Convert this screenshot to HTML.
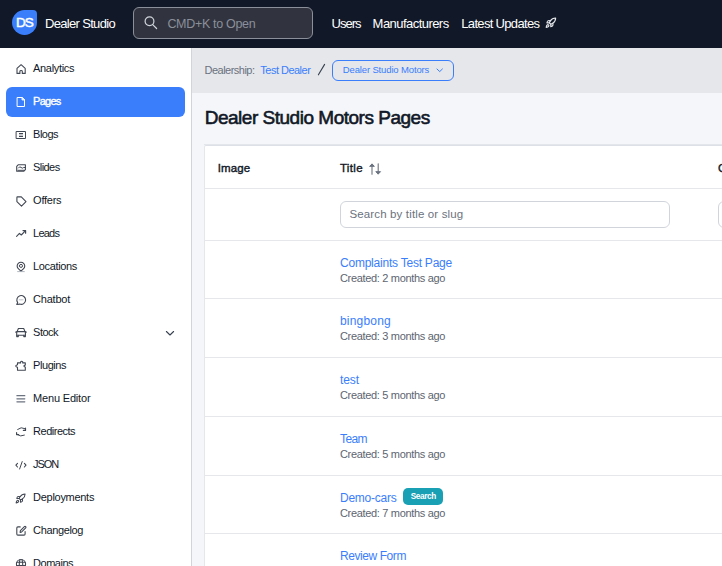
<!DOCTYPE html>
<html><head><meta charset="utf-8"><style>
*{box-sizing:border-box;margin:0;padding:0}
html,body{width:722px;height:566px;overflow:hidden;background:#f5f6f9;font-family:"Liberation Sans", sans-serif}
.a{position:absolute}
.t{position:absolute;white-space:nowrap;font-family:"Liberation Sans", sans-serif}
.ic{position:absolute;overflow:visible}
</style></head><body>
<div class="a" style="left:0;top:0;width:722px;height:48px;background:#111827"></div>
<div class="a" style="left:12px;top:10px;width:25px;height:25px;background:#3a7efc;border-radius:12.5px 4px 12.5px 12.5px"></div>
<div class="t" style="left:12px;top:10px;width:25px;height:25px;line-height:25px;text-align:center;color:#fff;font-weight:400;font-size:13.5px;letter-spacing:-1px;text-indent:-0.4px;-webkit-text-stroke:0.5px #fff">DS</div>


<div class="a" style="left:133px;top:7px;width:180px;height:32px;background:#31343f;border:1px solid #8b8f99;border-radius:6px"></div>
<div class="a" style="left:0;top:48px;width:191px;height:518px;background:#ffffff"></div>
<div class="a" style="left:191px;top:48px;width:1px;height:518px;background:#d1d5db"></div>
<div class="a" style="left:6px;top:87px;width:179px;height:30px;background:#3a7efc;border-radius:6px"></div>
<div class="a" style="left:192px;top:48px;width:530px;height:45px;background:#e5e7eb"></div>
<div class="a" style="left:332px;top:60px;width:122px;height:20.5px;border:1.2px solid #3a7efc;border-radius:6px"></div>
<div class="a" style="left:204px;top:144px;width:530px;height:1px;background:#e3e6eb"></div>
<div class="a" style="left:204px;top:145px;width:530px;height:430px;background:#fff;border:1px solid #e5e7eb;border-top-color:#dde1e7;border-radius:2px"></div>
<div class="a" style="left:205px;top:188px;width:530px;height:1px;background:#e5e7eb"></div>
<div class="a" style="left:340px;top:201px;width:330px;height:27px;border:1px solid #d1d5db;border-radius:6px;background:#fff"></div>
<div class="a" style="left:718px;top:201px;width:50px;height:27px;border:1px solid #d1d5db;border-radius:6px;background:#fff"></div>
<div class="a" style="left:205px;top:240px;width:530px;height:1px;background:#e5e7eb"></div>
<div class="a" style="left:205px;top:298px;width:530px;height:1px;background:#e5e7eb"></div>
<div class="a" style="left:205px;top:357px;width:530px;height:1px;background:#e5e7eb"></div>
<div class="a" style="left:205px;top:416px;width:530px;height:1px;background:#e5e7eb"></div>
<div class="a" style="left:205px;top:475px;width:530px;height:1px;background:#e5e7eb"></div>
<div class="a" style="left:205px;top:533px;width:530px;height:1px;background:#e5e7eb"></div>

<div class="a" style="left:403px;top:488px;width:40px;height:17px;background:#19a0b5;border-radius:5px"></div>
<svg class="ic" style="left:0;top:0;width:722px;height:566px" viewBox="0 0 722 566" fill="none" stroke-linecap="round" stroke-linejoin="round"><path d="M17,73.4V68.4L21.1,64.7L25.2,68.4V73.4H22.3V71.3Q22.3,70.5 21.1,70.5Q19.9,70.5 19.9,71.3V73.4Z" stroke="#414753" stroke-width="1.1" fill="none" /><path d="M17.5,97.5H22L24.5,100V106.5H17.5Z" stroke="#ffffff" stroke-width="1.0" fill="none" stroke-linejoin="miter"/><path d="M22,97.5V100H24.5Z" stroke="#ffffff" stroke-width="0.8" fill="rgba(255,255,255,0.7)" /><path d="M16.5,131.5H25.5V138.5H16.5Z" stroke="#414753" stroke-width="1.0" fill="none" stroke-linejoin="miter"/><path d="M19,133.5H23M19,136.5H23" stroke="#414753" stroke-width="1.0" fill="none" stroke-linecap="butt"/><path d="M19,134H23V136H19Z" stroke="none" stroke-width="0" fill="#c4c7cc" /><path d="M18.4,164.7H25.4V169.7L23.7,171.3H16.7V166.4Z" stroke="#414753" stroke-width="1.1" fill="none" /><path d="M17.9,170.3H24.2" stroke="#414753" stroke-width="1.0" fill="none" /><path d="M18.5,167.9Q19.7,165.9 21,167.4T23.7,167.5H25.3" stroke="#414753" stroke-width="1.0" fill="none" /><path d="M16.9,197.4Q16.9,196.9 17.4,196.9H21.3L26,201.6L21.5,206.1L16.9,201.6Z" stroke="#414753" stroke-width="1.1" fill="none" /><path d="M16.6,236.3L19.4,233.4L21.3,235L25.3,230.9" stroke="#414753" stroke-width="1.1" fill="none" /><path d="M23,230.6H25.6V233.2" stroke="#414753" stroke-width="1.2" fill="none" /><path d="M18.3,268.7A3.8,3.8 0 1 1 23.6,268.7L20.95,271.2Z" stroke="#414753" stroke-width="1.1" fill="none" /><path d="M20.95,264.5m-1.55,1.4a1.55,1.55 0 1 0 3.1,0a1.55,1.55 0 1 0 -3.1,0" stroke="#414753" stroke-width="1.0" fill="none" /><path d="M17.6,271.6H24.3" stroke="#9ca3af" stroke-width="0.8" fill="none" /><path d="M17.7,302.6A4.4,4.4 0 1 1 19.7,304.1L16.7,304.5Z" stroke="#414753" stroke-width="1.1" fill="none" /><path d="M19.2,299.8H23.2" stroke="#b8bcc4" stroke-width="0.9" fill="none" stroke-dasharray="0.9 0.6"/><path d="M17.1,331.6L18.4,328.5H23.7L25,331.6" stroke="#414753" stroke-width="1.1" fill="none" /><path d="M16.7,331.6H25.4V335.2H16.7Z" stroke="#414753" stroke-width="1.1" fill="none" /><path d="M16.7,335.2V336.6H18.3V335.2M23.8,335.2V336.6H25.4V335.2" stroke="#414753" stroke-width="1.1" fill="none" /><path d="M15.4,332.1H16.7M25.4,332.1H26.6" stroke="#414753" stroke-width="0.9" fill="none" /><path d="M17.5,362.9H20.6V361.9Q21.65,360.6 22.7,361.9V362.9H25.3V365.1Q23.9,365.3 23.9,366.1Q23.9,366.9 25.3,367.1V370.2H17.5V367.4Q15.7,366.9 15.7,366.1Q15.7,365.3 17.5,364.8Z" stroke="#414753" stroke-width="1.1" fill="none" /><path d="M16.9,395.7H24.8M16.9,398.8H24.8M16.9,401.8H24.8" stroke="#6b7280" stroke-width="1.2" fill="none" /><path d="M17.6,429.4Q21,426.4 25,428.6" stroke="#414753" stroke-width="1.0" fill="none" /><path d="M25.5,428.2V430.4H23.4" stroke="#414753" stroke-width="1.2" fill="none" /><path d="M16.9,434.4Q20.7,437.2 24.4,435.2" stroke="#414753" stroke-width="1.0" fill="none" /><path d="M16.6,432.7V434.6H18.6" stroke="#414753" stroke-width="1.2" fill="none" /><path d="M17.5,463.4L15.9,465.2L17.5,467" stroke="#414753" stroke-width="1.1" fill="none" /><path d="M24.4,463.4L26,465.2L24.4,467" stroke="#414753" stroke-width="1.1" fill="none" /><path d="M22.2,461.6L19.6,469" stroke="#414753" stroke-width="1.0" fill="none" /><path d="M20.2,526.9H17.9Q16.8,526.9 16.8,528V534Q16.8,535.1 17.9,535.1H24Q25.1,535.1 25.1,534V531.6" stroke="#414753" stroke-width="1.1" fill="none" /><path d="M20.1,532.4L20.4,530.6L24.4,526.6Q25,526 25.7,526.6Q26.3,527.3 25.7,527.9L21.7,531.9Z" stroke="#414753" stroke-width="1.1" fill="none" /><path d="M21,564.1m-4.6,0a4.6,4.6 0 1 0 9.2,0a4.6,4.6 0 1 0 -9.2,0" stroke="#414753" stroke-width="1.1" fill="none" /><path d="M16.8,562.2H25.2M16.6,565.6H25.4" stroke="#414753" stroke-width="1.1" fill="none" /><path d="M19.9,559.6Q18.6,564 19.9,568.6M22.1,559.6Q23.4,564 22.1,568.6" stroke="#414753" stroke-width="1.1" fill="none" /><path d="M166.4,331.5L170,335L173.6,331.5" stroke="#374151" stroke-width="1.1" fill="none" /><path d="M372,174.2V164.2" stroke="#6b7280" stroke-width="1.1" fill="none" /><path d="M369.9,166.1L372,163.9L374.1,166.1Z" stroke="#6b7280" stroke-width="1.0" fill="#6b7280" /><path d="M378.2,163.8V173.8" stroke="#6b7280" stroke-width="1.1" fill="none" /><path d="M376.1,171.9L378.2,174.1L380.3,171.9Z" stroke="#6b7280" stroke-width="1.0" fill="#6b7280" /><path d="M437,69L439.7,71.6L442.4,69" stroke="#3a7efc" stroke-width="1.0" fill="none" /><path d="M318.4,74.8L324.6,64.4" stroke="#374151" stroke-width="1.1" fill="none" /><path d="M149.5,21.3m-4.4,0a4.4,4.4 0 1 0 8.8,0a4.4,4.4 0 1 0 -8.8,0" stroke="#d1d5db" stroke-width="1.2" fill="none" /><path d="M152.7,24.6L156.6,28.5" stroke="#d1d5db" stroke-width="1.2" fill="none" /></svg>
<svg class="ic" style="left:15.4px;top:492.9px;width:11px;height:11px" viewBox="0 0 24 24" fill="none" stroke-linecap="round" stroke-linejoin="round" stroke="#414753" stroke-width="2.3"><path d="M4.5 16.5c-1.5 1.26-2 5-2 5s3.74-.5 5-2c.71-.84.7-2.13-.09-2.91a2.18 2.18 0 0 0-2.91-.09z"/><path d="M12 15l-3-3a22 22 0 0 1 2-3.95A12.88 12.88 0 0 1 22 2c0 2.72-.78 7.5-6 11a22.35 22.35 0 0 1-4 2z"/><path d="M9 12H4s.55-3.03 2-4c1.62-1.08 5 0 5 0"/><path d="M12 15v5s3.03-.55 4-2c1.08-1.62 0-5 0-5"/></svg>
<svg class="ic" style="left:545.2px;top:17.3px;width:11.6px;height:11.6px" viewBox="0 0 24 24" fill="none" stroke-linecap="round" stroke-linejoin="round" stroke="#e5e7eb" stroke-width="2.4"><path d="M4.5 16.5c-1.5 1.26-2 5-2 5s3.74-.5 5-2c.71-.84.7-2.13-.09-2.91a2.18 2.18 0 0 0-2.91-.09z"/><path d="M12 15l-3-3a22 22 0 0 1 2-3.95A12.88 12.88 0 0 1 22 2c0 2.72-.78 7.5-6 11a22.35 22.35 0 0 1-4 2z"/><path d="M9 12H4s.55-3.03 2-4c1.62-1.08 5 0 5 0"/><path d="M12 15v5s3.03-.55 4-2c1.08-1.62 0-5 0-5"/></svg>
<span class="t" style="left:45.0px;top:17.00px;font-size:13px;line-height:13px;color:#ffffff;font-weight:400;letter-spacing:-0.675px;">Dealer Studio</span>
<span class="t" style="left:167.4px;top:17.62px;font-size:12.5px;line-height:12.5px;color:#8b8f9a;font-weight:400;letter-spacing:-0.312px;">CMD+K to Open</span>
<span class="t" style="left:331.6px;top:17.20px;font-size:13px;line-height:13px;color:#ffffff;font-weight:400;letter-spacing:-0.991px;">Users</span>
<span class="t" style="left:372.6px;top:17.20px;font-size:13px;line-height:13px;color:#ffffff;font-weight:400;letter-spacing:-0.546px;">Manufacturers</span>
<span class="t" style="left:461.3px;top:17.20px;font-size:13px;line-height:13px;color:#ffffff;font-weight:400;letter-spacing:-0.675px;">Latest Updates</span>
<span class="t" style="left:33.1px;top:62.89px;font-size:11px;line-height:11px;color:#111827;font-weight:400;letter-spacing:-0.337px;">Analytics</span>
<span class="t" style="left:33.1px;top:95.89px;font-size:11px;line-height:11px;color:#ffffff;font-weight:400;letter-spacing:-0.741px;-webkit-text-stroke:0.35px #fff">Pages</span>
<span class="t" style="left:33.1px;top:128.89px;font-size:11px;line-height:11px;color:#111827;font-weight:400;letter-spacing:-0.506px;">Blogs</span>
<span class="t" style="left:33.1px;top:161.89px;font-size:11px;line-height:11px;color:#111827;font-weight:400;letter-spacing:-0.578px;">Slides</span>
<span class="t" style="left:33.1px;top:194.89px;font-size:11px;line-height:11px;color:#111827;font-weight:400;letter-spacing:-0.261px;">Offers</span>
<span class="t" style="left:33.1px;top:227.89px;font-size:11px;line-height:11px;color:#111827;font-weight:400;letter-spacing:-0.797px;">Leads</span>
<span class="t" style="left:33.1px;top:260.89px;font-size:11px;line-height:11px;color:#111827;font-weight:400;letter-spacing:-0.366px;">Locations</span>
<span class="t" style="left:33.1px;top:293.89px;font-size:11px;line-height:11px;color:#111827;font-weight:400;letter-spacing:-0.219px;">Chatbot</span>
<span class="t" style="left:33.1px;top:326.89px;font-size:11px;line-height:11px;color:#111827;font-weight:400;letter-spacing:-0.503px;">Stock</span>
<span class="t" style="left:33.1px;top:359.89px;font-size:11px;line-height:11px;color:#111827;font-weight:400;letter-spacing:-0.440px;">Plugins</span>
<span class="t" style="left:33.1px;top:392.89px;font-size:11px;line-height:11px;color:#111827;font-weight:400;letter-spacing:-0.183px;">Menu Editor</span>
<span class="t" style="left:33.1px;top:425.89px;font-size:11px;line-height:11px;color:#111827;font-weight:400;letter-spacing:-0.497px;">Redirects</span>
<span class="t" style="left:33.1px;top:458.89px;font-size:11px;line-height:11px;color:#111827;font-weight:400;letter-spacing:-1.086px;">JSON</span>
<span class="t" style="left:33.1px;top:491.89px;font-size:11px;line-height:11px;color:#111827;font-weight:400;letter-spacing:-0.291px;">Deployments</span>
<span class="t" style="left:33.1px;top:524.89px;font-size:11px;line-height:11px;color:#111827;font-weight:400;letter-spacing:-0.369px;">Changelog</span>
<span class="t" style="left:33.1px;top:557.89px;font-size:11px;line-height:11px;color:#111827;font-weight:400;letter-spacing:-0.487px;">Domains</span>
<span class="t" style="left:204.5px;top:64.59px;font-size:11px;line-height:11px;color:#6b7280;font-weight:400;letter-spacing:-0.513px;">Dealership:</span>
<span class="t" style="left:260.3px;top:64.59px;font-size:11px;line-height:11px;color:#3a7efc;font-weight:400;letter-spacing:-0.513px;">Test Dealer</span>
<span class="t" style="left:342.8px;top:64.76px;font-size:9.5px;line-height:9.5px;color:#3a7efc;font-weight:400;letter-spacing:-0.142px;">Dealer Studio Motors</span>
<span class="t" style="left:204.7px;top:108.22px;font-size:19px;line-height:19px;color:#111827;font-weight:400;letter-spacing:-0.486px;-webkit-text-stroke:0.6px #111827">Dealer Studio Motors Pages</span>
<span class="t" style="left:217.7px;top:162.67px;font-size:11.5px;line-height:11.5px;color:#111827;font-weight:400;letter-spacing:0.146px;-webkit-text-stroke:0.4px #111827">Image</span>
<span class="t" style="left:339.9px;top:162.67px;font-size:11.5px;line-height:11.5px;color:#111827;font-weight:400;letter-spacing:0.358px;-webkit-text-stroke:0.4px #111827">Title</span>
<span class="t" style="left:718.0px;top:162.67px;font-size:11.5px;line-height:11.5px;color:#111827;font-weight:400;letter-spacing:0.000px;-webkit-text-stroke:0.4px #111827">C</span>
<span class="t" style="left:349.4px;top:209.47px;font-size:11.5px;line-height:11.5px;color:#6b7280;font-weight:400;letter-spacing:0.148px;">Search by title or slug</span>
<span class="t" style="left:340.0px;top:257.14px;font-size:12px;line-height:12px;color:#3a7efc;font-weight:400;letter-spacing:-0.226px;">Complaints Test Page</span>
<span class="t" style="left:340.0px;top:273.19px;font-size:11px;line-height:11px;color:#5d6471;font-weight:400;letter-spacing:-0.329px;">Created: 2 months ago</span>
<span class="t" style="left:340.0px;top:315.14px;font-size:12px;line-height:12px;color:#3a7efc;font-weight:400;letter-spacing:0.201px;">bingbong</span>
<span class="t" style="left:340.0px;top:331.19px;font-size:11px;line-height:11px;color:#5d6471;font-weight:400;letter-spacing:-0.329px;">Created: 3 months ago</span>
<span class="t" style="left:340.0px;top:374.14px;font-size:12px;line-height:12px;color:#3a7efc;font-weight:400;letter-spacing:-0.086px;">test</span>
<span class="t" style="left:340.0px;top:390.19px;font-size:11px;line-height:11px;color:#5d6471;font-weight:400;letter-spacing:-0.329px;">Created: 5 months ago</span>
<span class="t" style="left:340.0px;top:433.14px;font-size:12px;line-height:12px;color:#3a7efc;font-weight:400;letter-spacing:-0.586px;">Team</span>
<span class="t" style="left:340.0px;top:449.19px;font-size:11px;line-height:11px;color:#5d6471;font-weight:400;letter-spacing:-0.329px;">Created: 5 months ago</span>
<span class="t" style="left:340.0px;top:492.14px;font-size:12px;line-height:12px;color:#3a7efc;font-weight:400;letter-spacing:-0.243px;">Demo-cars</span>
<span class="t" style="left:340.0px;top:508.19px;font-size:11px;line-height:11px;color:#5d6471;font-weight:400;letter-spacing:-0.329px;">Created: 7 months ago</span>
<span class="t" style="left:340.0px;top:550.14px;font-size:12px;line-height:12px;color:#3a7efc;font-weight:400;letter-spacing:-0.426px;">Review Form</span>
<span class="t" style="left:410.8px;top:492.51px;font-size:8.2px;line-height:8.2px;color:#ffffff;font-weight:700;letter-spacing:-0.385px;">Search</span>
</body></html>
